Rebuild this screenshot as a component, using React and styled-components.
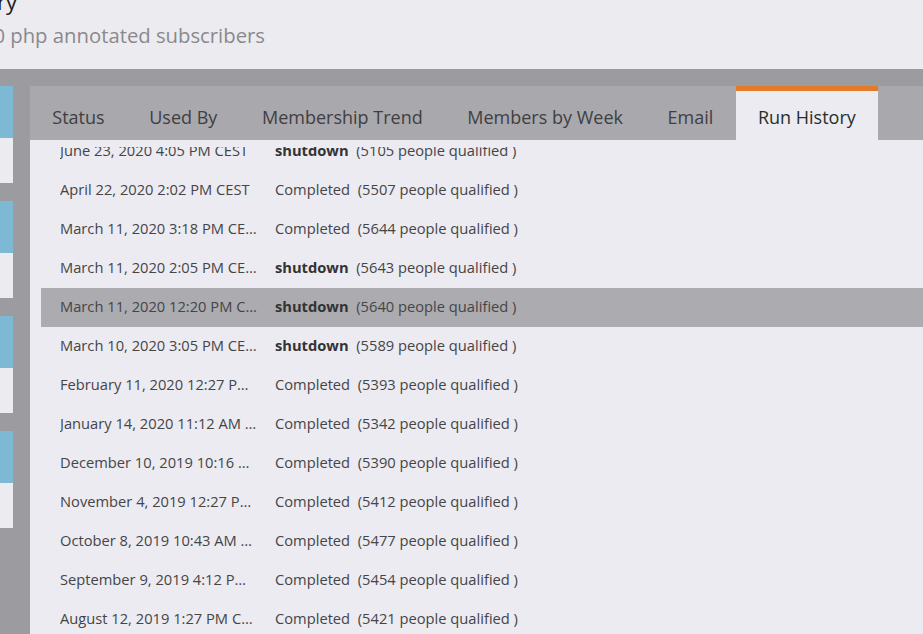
import React from "react";
import styled, { createGlobalStyle } from "styled-components";

const GlobalStyle = createGlobalStyle`
  html, body {
    margin: 0;
    padding: 0;
    background: #ecebf0;
    font-family: "Open Sans", "Noto Sans", sans-serif;
    overflow: hidden;
  }
`;

const tabs = ["Status", "Used By", "Membership Trend", "Members by Week", "Email", "Run History"];

const runs = [
  { date: "June 23, 2020 4:05 PM CEST", status: "shutdown", count: 5105 },
  { date: "April 22, 2020 2:02 PM CEST", status: "Completed", count: 5507 },
  { date: "March 11, 2020 3:18 PM CEST", status: "Completed", count: 5644 },
  { date: "March 11, 2020 2:05 PM CEST", status: "shutdown", count: 5643 },
  { date: "March 11, 2020 12:20 PM CEST", status: "shutdown", count: 5640, selected: true },
  { date: "March 10, 2020 3:05 PM CEST", status: "shutdown", count: 5589 },
  { date: "February 11, 2020 12:27 PM CET", status: "Completed", count: 5393 },
  { date: "January 14, 2020 11:12 AM CET", status: "Completed", count: 5342 },
  { date: "December 10, 2019 10:16 AM CET", status: "Completed", count: 5390 },
  { date: "November 4, 2019 12:27 PM CET", status: "Completed", count: 5412 },
  { date: "October 8, 2019 10:43 AM CEST", status: "Completed", count: 5477 },
  { date: "September 9, 2019 4:12 PM CEST", status: "Completed", count: 5454 },
  { date: "August 12, 2019 1:27 PM CEST", status: "Completed", count: 5421 },
];

const Page = styled.div`
  height: 634px;
  display: flex;
  flex-direction: column;
`;

const Header = styled.header`
  height: 69px;
  flex-shrink: 0;
  overflow: hidden;
`;

// the header is cut at the left edge: each line is right-aligned to where it ends
const HeaderLine = styled.div`
  width: ${(p) => p.$end}px;
  display: flex;
  justify-content: flex-end;
  white-space: nowrap;
`;

const Title = styled(HeaderLine)`
  margin-top: -14px;
  font-size: 22px;
  line-height: 30px;
  color: #1e1e1e;
`;

const Subtitle = styled(HeaderLine)`
  margin-top: 6px;
  font-size: 20.3px;
  line-height: 26px;
  color: #8a898d;
`;

const Band = styled.div`
  flex: 1;
  display: flex;
  gap: 17px;
  padding-top: 17px;
  background: #9c9ba0;
  min-height: 0;
`;

const Sidebar = styled.div`
  width: 13px;
  flex-shrink: 0;
  display: flex;
  flex-direction: column;
  gap: 18px;
`;

const Card = styled.div`
  display: flex;
  flex-direction: column;
`;

const CardHead = styled.div`
  height: 52px;
  background: #7db8d5;
`;

const CardBody = styled.div`
  height: 45px;
  background: #ecebf0;
`;

const Panel = styled.section`
  flex: 1;
  display: flex;
  flex-direction: column;
  background: #ecebf1;
  min-width: 0;
`;

const TabBar = styled.nav`
  height: 54px;
  flex-shrink: 0;
  display: flex;
  background: #a9a8ad;
`;

const Tab = styled.div`
  display: flex;
  align-items: center;
  padding: 3px 22.3px 0;
  font-size: 18px;
  color: ${(p) => (p.$active ? "#25302b" : "#3f3f42")};
  background: ${(p) => (p.$active ? "#ecebf1" : "transparent")};
  border-top: 5px solid ${(p) => (p.$active ? "#e27a27" : "transparent")};
  box-sizing: border-box;
  white-space: nowrap;
`;

const Content = styled.div`
  flex: 1;
  display: flex;
  flex-direction: column;
  padding-top: 7px;
  min-height: 0;
`;

const Scroller = styled.div`
  flex: 1;
  overflow: hidden;
  min-height: 0;
`;

const List = styled.div`
  margin-top: -15px;
  padding-left: 11px;
`;

const Row = styled.div`
  height: 39px;
  box-sizing: border-box;
  display: flex;
  align-items: center;
  padding: 0 0 4px 19px;
  background: ${(p) => (p.$selected ? "#acabb0" : "transparent")};
  font-size: 14.7px;
  color: #454547;
`;

const DateCell = styled.div`
  width: 197px;
  margin-right: 18px;
  flex-shrink: 0;
  white-space: nowrap;
  overflow: hidden;
  text-overflow: ellipsis;
`;

const StatusCell = styled.div`
  white-space: pre;
`;

const Status = styled.span`
  font-weight: ${(p) => (p.$bold ? 700 : 400)};
  color: ${(p) => (p.$bold ? "#333335" : "inherit")};
`;

export default function App() {
  return (
    <Page>
      <GlobalStyle />
      <Header>
        <Title $end={17}>Run History</Title>
        <Subtitle $end={265}>Q2 2020 php annotated subscribers</Subtitle>
      </Header>
      <Band>
        <Sidebar>
          {[0, 1, 2, 3].map((i) => (
            <Card key={i}>
              <CardHead />
              <CardBody />
            </Card>
          ))}
        </Sidebar>
        <Panel>
          <TabBar>
            {tabs.map((t) => (
              <Tab key={t} $active={t === "Run History"}>
                {t}
              </Tab>
            ))}
          </TabBar>
          <Content>
            <Scroller>
              <List>
                {runs.map((r) => (
                  <Row key={r.date} $selected={r.selected}>
                    <DateCell>{r.date}</DateCell>
                    <StatusCell>
                      <Status $bold={r.status === "shutdown"}>{r.status}</Status>
                      {"  "}({r.count} people qualified )
                    </StatusCell>
                  </Row>
                ))}
              </List>
            </Scroller>
          </Content>
        </Panel>
      </Band>
    </Page>
  );
}
